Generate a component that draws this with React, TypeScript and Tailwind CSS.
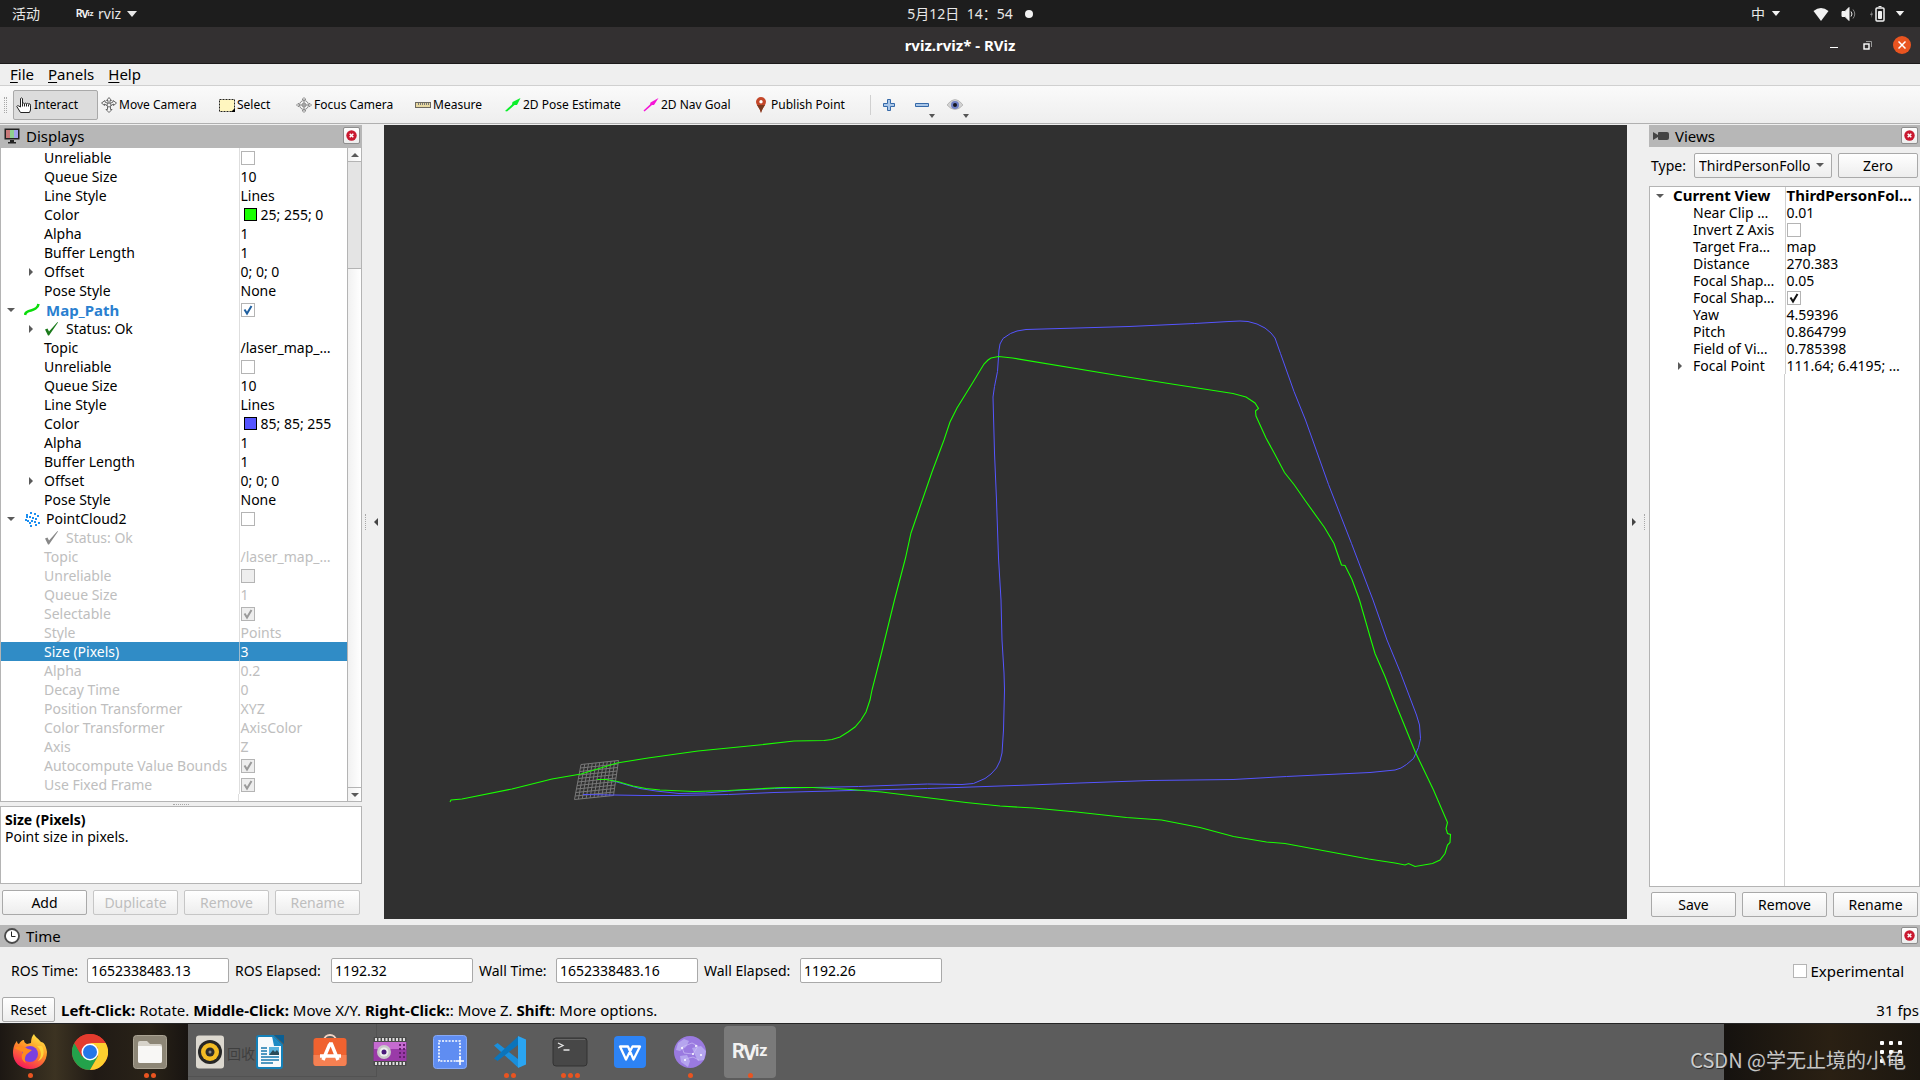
import type { ReactNode } from "react";

type Row = {
  name: string;
  value?: string;
  check?: boolean;
  swatch?: "green" | "blue";
  arrow?: "open" | "closed";
  level?: number;
  icon?: ReactNode;
  off?: boolean;
  selected?: boolean;
  link?: boolean;
};

const GREEN_PATH =
  "450,802 451,800 462,799 512,789 552,779 581,774 617,763 648,758 698,751 759,745 794,741 824,740.5 832,739.5 840,737 848,732 855,727 861,720 866,712 870,700 872,690 881,655 894.5,600 905.5,558 911,533 932,472 944,440 950,422 957,408 972.5,383 984,364 988,360 991,358 998.5,356.5 1012.5,358 1118,375.5 1175,384.5 1233,393.5 1246,397 1255,403 1258.5,408.5 1255.5,411 1256,416 1266,438 1275,454.5 1284.5,472.5 1294,484.5 1305.5,501 1324.5,527.5 1334,543.5 1338.5,556.5 1341.5,565 1345,565.5 1352,579.5 1359.5,600 1371,640 1375,653.5 1385,676.5 1393.5,698.5 1415.5,752.5 1433.5,790 1447.5,822.5 1446,828.5 1447.5,833.5 1450.5,834.5 1450,842.5 1447.5,845 1445,853.5 1440,860 1432.5,863.5 1415,866.5 1408.5,863.5 1405,865 1395,863 1368.5,859 1285,843.5 1266.5,842 1233.5,836.5 1200,827.5 1161.5,820 1126.5,817.5 1076.5,812 1033.5,808 1000,806 966,802.5 881.5,792 851,789.5 812.5,787.5 782,787.5 728.5,790.5 694,791.5 660,790 646,788.5 633,786 617.5,781.5 606,779.5 597,779.5";

const BLUE_PATH =
  "610,780 629,785.5 640,788.5 656,791 679,793.5 705.5,793 736,790.5 774.5,788.5 812.5,787.5 858.5,786.5 927.5,784 962,784.5 973.5,783.5 985,778.5 991,774 996.5,768 1000,761 1002,753 1003.5,730 1004.5,690 1004,673 1002,640 1001,600 998.5,558 996.5,500 994.5,453 993,397 994.5,386.5 997.5,371.5 999,350 1000,344 1003,338.5 1010.5,333.5 1017,331 1026,329.5 1129,326.5 1194.5,323.5 1229,321.5 1240,321 1248,321.5 1257,324 1265,328 1271,333 1275,338 1280.5,353.5 1294,391.5 1305.5,420 1328.5,484.5 1351.5,543.5 1373,600 1387,640 1400,671.5 1416.5,715 1419.5,725 1420.5,738.5 1418.5,747.5 1413.5,758.5 1406.5,764.5 1401,768 1395,770 1370,772.5 1286.5,776.5 1233,779.5 1150,780.5 1080,783 1030,785 1000,786 927.5,788.5 774,792.5 728.5,794.5 675,795.5 644,795.5 583,794.5";

const pathIcon = (
  <svg viewBox="0 0 16 16" className="size-4">
    <path d="M1 13c.5-3.500 3.500-4 6-4.500S14 6 14.500 2" fill="none" stroke="#0bdc0b" strokeWidth="2.600" />
  </svg>
);

const cloudIcon = (
  <svg viewBox="0 0 16 16" className="size-4" fill="#1d8ff0">
    {[[6, 1], [2, 3], [10, 2], [13, 4], [5, 5], [8, 6], [1, 8], [3, 9], [11, 7], [7, 9], [14, 11], [5, 11], [10, 10], [6, 14], [11, 13], [2, 5]].map(
      ([x, y]) => (
        <rect key={`${x}-${y}`} x={x} y={y} width="2" height="2" />
      )
    )}
  </svg>
);

function Tick({ color }: { color: string }) {
  return (
    <svg viewBox="0 0 16 16" className="size-4">
      <path d="M1 8.500l2.500-1 1.500 3L13.500 1 14 1.500 5 14.500H4z" fill={color} />
    </svg>
  );
}

const displayRows: Row[] = [
  { name: "Unreliable", check: false },
  { name: "Queue Size", value: "10" },
  { name: "Line Style", value: "Lines" },
  { name: "Color", value: "25; 255; 0", swatch: "green" },
  { name: "Alpha", value: "1" },
  { name: "Buffer Length", value: "1" },
  { name: "Offset", value: "0; 0; 0", arrow: "closed" },
  { name: "Pose Style", value: "None" },
  { name: "Map_Path", check: true, arrow: "open", level: 0, icon: pathIcon, link: true },
  { name: "Status: Ok", arrow: "closed", icon: <Tick color="#1b7a1b" /> },
  { name: "Topic", value: "/laser_map_…" },
  { name: "Unreliable", check: false },
  { name: "Queue Size", value: "10" },
  { name: "Line Style", value: "Lines" },
  { name: "Color", value: "85; 85; 255", swatch: "blue" },
  { name: "Alpha", value: "1" },
  { name: "Buffer Length", value: "1" },
  { name: "Offset", value: "0; 0; 0", arrow: "closed" },
  { name: "Pose Style", value: "None" },
  { name: "PointCloud2", check: false, arrow: "open", level: 0, icon: cloudIcon },
  { name: "Status: Ok", icon: <Tick color="#888888" />, off: true },
  { name: "Topic", value: "/laser_map_…", off: true },
  { name: "Unreliable", check: false, off: true },
  { name: "Queue Size", value: "1", off: true },
  { name: "Selectable", check: true, off: true },
  { name: "Style", value: "Points", off: true },
  { name: "Size (Pixels)", value: "3", selected: true },
  { name: "Alpha", value: "0.2", off: true },
  { name: "Decay Time", value: "0", off: true },
  { name: "Position Transformer", value: "XYZ", off: true },
  { name: "Color Transformer", value: "AxisColor", off: true },
  { name: "Axis", value: "Z", off: true },
  { name: "Autocompute Value Bounds", check: true, off: true },
  { name: "Use Fixed Frame", check: true, off: true },
];

const viewRows: Row[] = [
  { name: "Near Clip …", value: "0.01" },
  { name: "Invert Z Axis", check: false },
  { name: "Target Fra…", value: "map" },
  { name: "Distance", value: "270.383" },
  { name: "Focal Shap…", value: "0.05" },
  { name: "Focal Shap…", check: true },
  { name: "Yaw", value: "4.59396" },
  { name: "Pitch", value: "0.864799" },
  { name: "Field of Vi…", value: "0.785398" },
  { name: "Focal Point", value: "111.64; 6.4195; …", arrow: "closed" },
];

function Arrow({ open }: { open?: boolean }) {
  return (
    <svg viewBox="0 0 8 8" className="size-2" fill="#5a5a5a">
      <path d={open ? "M0 2h8L4 6z" : "M2 0v8l4-4z"} />
    </svg>
  );
}

function Check({ label, checked, off, tick }: { label: string; checked?: boolean; off?: boolean; tick: string }) {
  return (
    <span className="relative block size-3.5">
      <input
        type="checkbox"
        aria-label={label}
        defaultChecked={checked}
        disabled={off}
        className="block size-3.5 appearance-none border border-[#b4b4b4] bg-white disabled:bg-[#eeeeee]"
      />
      {checked && (
        <svg viewBox="0 0 14 14" className="pointer-events-none absolute inset-0" fill="none" stroke={tick} strokeWidth="2">
          <path d="M3.500 6.500l2.500 4L10.500 3" />
        </svg>
      )}
    </span>
  );
}

function PanelButton({ children, disabled, className = "flex-1" }: { children: ReactNode; disabled?: boolean; className?: string }) {
  return (
    <button
      disabled={disabled}
      className={`h-[25px] rounded-xs border border-[#a9a9a9] bg-linear-to-b from-white to-[#ededed] leading-5 disabled:border-[#c6c6c6] disabled:text-[#bebebe] ${className}`}
    >
      {children}
    </button>
  );
}

function PanelHeader({ title, icon }: { title: string; icon: ReactNode }) {
  return (
    <div className="flex h-[22px] shrink-0 items-center bg-[#b7b7b7] pr-0.5 pl-1">
      {icon}
      <h2 className="ml-1.5 flex-1 text-[15px]">{title}</h2>
      <button
        aria-label={`Close ${title}`}
        className="mb-px flex size-[17px] items-center justify-center rounded-xs border border-[#8e8e8e] bg-linear-to-b from-white to-[#ededed]"
      >
        <svg viewBox="0 0 11 11" className="size-[11px]">
          <circle cx="5.500" cy="5.500" r="5.200" fill="#c9182f" />
          <path d="M3.700 3.700l3.600 3.600M7.300 3.700L3.700 7.300" stroke="#fff" strokeWidth="1.500" />
        </svg>
      </button>
    </div>
  );
}

function DisplayTree() {
  return (
    <div className="flex min-h-0 flex-1 border border-t-[#b7b7b7] border-[#b4b4b4] bg-white">
      <div className="flex min-w-0 flex-1 flex-col overflow-hidden">
        <table className="w-full table-fixed">
          <tbody>
            {displayRows.map((row, i) => (
              <tr
                key={i}
                className={`h-[19px] ${row.selected ? "bg-[#308cc6] text-white" : row.off ? "text-[#bebebe]" : ""} ${
                  row.link ? "text-[15px] font-bold text-[#2a7fd0]" : ""
                }`}
              >
                <td className="w-[238px] border-r border-[#d0d0d0]/70 p-0 leading-[18px] whitespace-nowrap">
                  <span className={`flex h-[19px] items-center ${row.level === 0 ? "pl-1.5" : "pl-[26px]"}`}>
                    <span className="w-[17px] shrink-0">{row.arrow && <Arrow open={row.arrow === "open"} />}</span>
                    {row.icon && <span className="mr-1.5">{row.icon}</span>}
                    {row.name}
                  </span>
                </td>
                <td className="p-0 pl-px leading-[18px] whitespace-nowrap">
                  <span className="flex h-[19px] items-center">
                    {row.swatch === "green" && <i className="mr-1 ml-[3px] size-[13px] border border-black bg-[#19ff00]" />}
                    {row.swatch === "blue" && <i className="mr-1 ml-[3px] size-[13px] border border-black bg-[#5555ff]" />}
                    {row.check !== undefined && (
                      <Check label={row.name} checked={row.check} off={row.off} tick={row.off ? "#9a9a9a" : "#1f5f9f"} />
                    )}
                    {row.value}
                  </span>
                </td>
              </tr>
            ))}
          </tbody>
        </table>
        <div className="w-[238px] flex-1 border-r border-[#d0d0d0]/70" />
      </div>
      <div className="flex w-3.5 flex-col border-l border-[#b4b4b4] bg-linear-to-r from-[#f1f1f1] to-white">
        <button aria-label="Scroll up" className="flex h-[13px] items-center justify-center">
          <svg viewBox="0 0 8 8" className="size-2" fill="#5a5a5a"><path d="M0 6h8L4 2z" /></svg>
        </button>
        <div className="h-[108px] border-y border-[#b4b4b4] bg-[#e4e4e4]" />
        <div className="flex-1" />
        <button aria-label="Scroll down" className="flex h-3.5 items-center justify-center border-t border-[#b4b4b4]">
          <Arrow open />
        </button>
      </div>
    </div>
  );
}

function ViewTree() {
  return (
    <div className="mt-2 flex min-h-0 flex-1 flex-col border border-[#b4b4b4] bg-white">
      <table className="w-full table-fixed">
        <tbody>
          <tr className="h-[17px] text-[15px] font-bold">
            <td className="w-[135px] border-r border-[#d0d0d0] p-0 leading-[17px] whitespace-nowrap">
              <span className="flex h-[17px] items-center pl-1.5">
                <span className="w-[17px]"><Arrow open /></span>
                Current View
              </span>
            </td>
            <td className="p-0 pl-px leading-[17px] whitespace-nowrap">ThirdPersonFol…</td>
          </tr>
          {viewRows.map((row, i) => (
            <tr key={i} className="h-[17px]">
              <td className="border-r border-[#d0d0d0] p-0 leading-[17px] whitespace-nowrap">
                <span className="flex h-[17px] items-center pl-[26px]">
                  <span className="w-[17px] shrink-0">{row.arrow && <Arrow />}</span>
                  {row.name}
                </span>
              </td>
              <td className="p-0 pl-px leading-[17px] whitespace-nowrap">
                {row.check !== undefined ? <Check label={row.name} checked={row.check} tick="#111111" /> : row.value}
              </td>
            </tr>
          ))}
        </tbody>
      </table>
      <div className="w-[135px] flex-1 border-r border-[#d0d0d0]" />
    </div>
  );
}

function Scene() {
  const a = [581, 764.5], b = [618.5, 760.5], c = [613.5, 795.5], d = [574.5, 799.5];
  const mix = (p: number[], q: number[], t: number) => [p[0] + (q[0] - p[0]) * t, p[1] + (q[1] - p[1]) * t];
  const lines = Array.from({ length: 11 }, (_, i) => i / 10).flatMap((t) => [
    [mix(a, b, t), mix(d, c, t)],
    [mix(a, d, t), mix(b, c, t)],
  ]);
  return (
    <svg viewBox="384 125 1243 794" className="h-full w-full" fill="none">
      <g stroke="#a0a0a0" strokeWidth="1" opacity="0.650">
        {lines.map(([p, q], i) => (
          <line key={i} x1={p[0]} y1={p[1]} x2={q[0]} y2={q[1]} />
        ))}
      </g>
      <polyline points={BLUE_PATH} stroke="#5555ff" strokeWidth="1" />
      <polyline points={GREEN_PATH} stroke="#19ff00" strokeWidth="1.100" />
    </svg>
  );
}

const crosshair = (
  <svg viewBox="0 0 16 16" className="size-4" fill="none" stroke="#8a8a8a" strokeWidth="1">
    <path d="M6.500 3V2L8 .5 9.500 2v1M6.500 13v1L8 15.500 9.500 14v-1M3 6.500H2L.5 8 2 9.500h1M13 6.500h1L15.500 8 14 9.500h-1" />
    <circle cx="8" cy="8" r="4.500" />
    <circle cx="8" cy="8" r="2" />
    <path d="M8 2v12M2 8h12" />
  </svg>
);

const tools = [
  {
    label: "Interact",
    width: "w-[85px]",
    icon: (
      <svg viewBox="0 0 16 16" className="size-4" fill="#fff" stroke="#222" strokeWidth="1">
        <path d="M4.500 10V1.500q1-1.200 2 0V6.500q1-.800 2 0 1-.800 2 .2 1-.800 2 .2 2-.600 2 1.300V13l-1 2.500H4.500L.8 9.500q.5-1.500 2-.5z" />
        <path d="M6.500 6.500v3M8.500 7v2.500M10.500 7v2.500M12.500 7.500v2" />
      </svg>
    ),
  },
  {
    label: "Move Camera",
    width: "w-[118px]",
    icon: (
      <svg viewBox="0 0 16 16" className="size-4" fill="#f4f4f4" stroke="#666" strokeWidth="1">
        <path d="M8 .5l2.500 3H9v3l3-1.500V3.500L15.500 6l-3 2.500V7L9.500 9v3.500H11l-3 3-3-3h1.500V9l-3-2v1.500L.5 6l3.500-2.500V5l3 1.500v-3H5.500z" />
        <circle cx="8" cy="8" r="2" />
      </svg>
    ),
  },
  {
    label: "Select",
    width: "w-[77px]",
    icon: (
      <svg viewBox="0 0 16 16" className="size-4">
        <rect x=".5" y="2.500" width="15" height="12" fill="#fff6bf" stroke="#222" strokeDasharray="2 1" />
        <path d="M16 11v4h-4z" fill="#000" />
      </svg>
    ),
  },
  { label: "Focus Camera", width: "w-[119px]", icon: crosshair },
  {
    label: "Measure",
    width: "w-[90px]",
    icon: (
      <svg viewBox="0 0 16 16" className="size-4">
        <rect x=".5" y="5.500" width="15" height="5" fill="#e8d9a2" stroke="#6d6960" />
        <path d="M3.500 6v2M5.500 6v2M7.500 6v2M9.500 6v2M11.500 6v2M13.500 6v2" stroke="#777" />
      </svg>
    ),
  },
  {
    label: "2D Pose Estimate",
    width: "w-[138px]",
    icon: (
      <svg viewBox="0 0 16 16" className="size-4" fill="#0bef2b">
        <path d="M15.500 1L12 8 9.500 8 2 14.500 0 14l7-6.500.5-2.500z" />
      </svg>
    ),
  },
  {
    label: "2D Nav Goal",
    width: "w-[110px]",
    icon: (
      <svg viewBox="0 0 16 16" className="size-4" fill="#f514d6">
        <path d="M15.500 1L11 8 9 8 1.500 14.500 .5 13.500l6.500-6 .5-2z" />
      </svg>
    ),
  },
  {
    label: "Publish Point",
    width: "w-[110px]",
    icon: (
      <svg viewBox="0 0 16 16" className="size-4">
        <path d="M8 16C7 11 3 8.500 3 4.800a5 4.800 0 0 1 10 0C13 8.500 9 11 8 16z" fill="#c4472a" />
        <path d="M8 16c-.8-4-3-6-4-8h8c-1 2-3 4-4 8z" fill="#7a3a20" />
        <circle cx="8" cy="4.800" r="1.700" fill="#fff" />
      </svg>
    ),
  },
];

const timeFields = [
  { label: "ROS Time:", value: "1652338483.13", width: "w-[70px]" },
  { label: "ROS Elapsed:", value: "1192.32", width: "w-[90px]" },
  { label: "Wall Time:", value: "1652338483.16", width: "w-[71px]" },
  { label: "Wall Elapsed:", value: "1192.26", width: "w-[90px]" },
];

function RvizLogo({ className }: { className: string }) {
  return (
    <svg viewBox="0 0 36 32" className={`[font-family:Roboto,sans-serif] ${className}`} fill="#f2f2f2" fontWeight="700">
      <text x="0" y="22" fontSize="20">R</text>
      <text x="11" y="24" fontSize="21">V</text>
      <text x="23" y="20" fontSize="16">iz</text>
    </svg>
  );
}

const dockApps: { name: string; dots: number; icon: ReactNode }[] = [
  {
    name: "Firefox",
    dots: 1,
    icon: (
      <>
        <defs>
          <linearGradient id="ff" x1="0.800" y1="0" x2="0.300" y2="1">
            <stop offset="0" stopColor="#fff04a" />
            <stop offset=".45" stopColor="#ff9326" />
            <stop offset="1" stopColor="#f5155c" />
          </linearGradient>
        </defs>
        <path d="M22 0c1 3 4 4 7 8 3 0 5 4 6 10 0 10-7 17-17 17S1 28 1 19C1 13 3 9 5 7c0 2 1 3 2 3 1-2 3-4 5-4 0 2 1 3 3 4l4-1c0-4 1-7 3-9z" fill="url(#ff)" />
        <circle cx="18" cy="20" r="8" fill="#7b3fe0" />
        <path d="M2 14c5-3 10-2 14 1l4 1-5 4c-2 2-3 6-1 9-5-2-5-8-3-11z" fill="#ff8a1e" />
        <path d="M25 12c5 4 5 11 1 15 6-2 7-10 4-15z" fill="#ffd43a" />
      </>
    ),
  },
  {
    name: "Chrome",
    dots: 0,
    icon: (
      <>
        <circle cx="18" cy="18" r="18" fill="#e33b2e" />
        <path d="M2.400 9A18 18 0 0 0 18 36l8-13.500-15.800 0z" fill="#23a24b" />
        <path d="M33.600 9A18 18 0 0 1 18 36l7.800-13.500L26 14 18 9z" fill="#fdcf2f" />
        <path d="M2.400 9A18 18 0 0 1 33.600 9H18l-8 13.500z" fill="#e33b2e" />
        <circle cx="18" cy="18" r="8.500" fill="#fff" />
        <circle cx="18" cy="18" r="7" fill="#2576e8" />
      </>
    ),
  },
  {
    name: "Files",
    dots: 2,
    icon: (
      <>
        <rect x="1.500" y="1.500" width="33" height="33" rx="3" fill="#8d8676" stroke="#aaa393" />
        <path d="M6 9q0-2 2-2h7l3 3h10q2 0 2 2v15q0 2-2 2H8q-2 0-2-2z" fill="#d7d3ca" />
        <path d="M6 12h22q2 0 2 2v13q0 2-2 2H8q-2 0-2-2z" fill="#f8f7f5" />
      </>
    ),
  },
  {
    name: "Rhythmbox",
    dots: 0,
    icon: (
      <>
        <rect x="4" y="1.500" width="28" height="33" rx="3" fill="#dcd8cf" />
        <circle cx="18" cy="18" r="12" fill="#262626" />
        <circle cx="18" cy="18" r="9" fill="#f4bc24" />
        <circle cx="18" cy="18" r="4.500" fill="#2b2b2b" />
        <circle cx="18" cy="18" r="1.500" fill="#888" />
      </>
    ),
  },
  {
    name: "LibreOffice Writer",
    dots: 0,
    icon: (
      <>
        <path d="M7 2h14l9 9v21q0 2-2 2H7q-2 0-2-2V4q0-2 2-2z" fill="#f6fafc" stroke="#1480b8" strokeWidth="2" />
        <path d="M22 1h10v9z" fill="#0b5f93" />
        <path d="M20 2l10 10h-8z" fill="#1c8ac4" />
        <path d="M9 14h6M9 17h6M9 20h6M9 23h18M9 26h18M9 29h12" stroke="#1778ad" strokeWidth="1.500" />
        <rect x="17" y="13" width="10" height="8" fill="#58b2dd" />
        <path d="M17 21l4-5 2 2 2-2 2 3v2z" fill="#2c4b58" />
      </>
    ),
  },
  {
    name: "Ubuntu Software",
    dots: 0,
    icon: (
      <>
        <path d="M12 7c0-8 12-8 12 0" fill="none" stroke="#f3d4c4" strokeWidth="2" />
        <rect x="1.500" y="4" width="33" height="28" rx="3" fill="#f0622f" />
        <path d="M1.500 21h33v8q0 3-3 3h-27q-3 0-3-3z" fill="#f58052" />
        <path d="M17.800 10L11 26M17 10h2.500L26 26M8 22h21" fill="none" stroke="#fff" strokeWidth="3.400" />
      </>
    ),
  },
  {
    name: "Cheese",
    dots: 0,
    icon: (
      <>
        <rect x="1.500" y="3" width="33" height="29" rx="1" fill="#4a4a4a" />
        <rect x="1.500" y="8" width="33" height="19" fill="#9a3aa8" />
        <path d="M2 8h32v7H2z" fill="#c56bd0" />
        <path d="M3 5.500h31M3 29.500h31" stroke="#ddd" strokeWidth="3" strokeDasharray="2 1.500" />
        <path d="M28 10v16M32 10v16" stroke="#65206f" strokeWidth="2" strokeDasharray="2 2" />
        <circle cx="12" cy="18" r="7" fill="#c9c9c9" />
        <circle cx="12" cy="18" r="4.500" fill="#eee" />
        <circle cx="12" cy="18" r="2.500" fill="#4b1b7a" />
      </>
    ),
  },
  {
    name: "Screenshot",
    dots: 0,
    icon: (
      <>
        <rect x="1.500" y="1.500" width="33" height="33" rx="3" fill="#5f8df2" stroke="#85a9f8" />
        <path d="M28 24V7H7v20h17" fill="none" stroke="#fff" strokeWidth="1.600" strokeDasharray="2 1.300" />
        <path d="M28 23v8M24 27h8" stroke="#fff" strokeWidth="1.600" />
      </>
    ),
  },
  {
    name: "Visual Studio Code",
    dots: 2,
    icon: (
      <>
        <path d="M2 11.500l3.500-2.500L26 25v8.500z" fill="#1a8fdc" />
        <path d="M2 24.500L5.500 27 26 11V2.500z" fill="#0c74ba" />
        <path d="M26 2l8 3.500v25L26 34z" fill="#2aa5f2" />
      </>
    ),
  },
  {
    name: "Terminal",
    dots: 3,
    icon: (
      <>
        <rect x="1" y="4" width="34" height="28" rx="3" fill="#474747" stroke="#333" />
        <path d="M3 5.500h30" stroke="#666" />
        <path d="M6 9l5 2.500-5 2.500M11.500 16h6" fill="none" stroke="#e8e8e8" strokeWidth="1.300" />
      </>
    ),
  },
  {
    name: "WPS Office",
    dots: 0,
    icon: (
      <>
        <rect x="2" y="2" width="32" height="32" rx="4" fill="#2d83f5" />
        <path d="M8 12.500h8l5.500 13 6.500-13h-7.500l-6.500 13z" fill="none" stroke="#fff" strokeWidth="2.300" strokeLinejoin="round" />
      </>
    ),
  },
  {
    name: "Network",
    dots: 1,
    icon: (
      <>
        <circle cx="18" cy="18" r="16" fill="#9a7ae0" />
        <path d="M6 9l6-4 5 2-3 6-6 4-4-1zM20 14l9-2 5 5-2 9-6 1-3-6zM8 22l7-1 3 6-2 6-7-5z" fill="#b5a5ee" />
        <path d="M10 13l10-4 6 3-5 8-9-1zM13 25l8-2 6 3" fill="none" stroke="#cdbff7" strokeWidth=".7" />
        <g fill="#fff">
          <circle cx="10" cy="14" r="1" /><circle cx="24" cy="12" r="1" /><circle cx="13" cy="26" r="1" /><circle cx="21" cy="20" r="1" /><circle cx="29" cy="21" r="1" />
        </g>
      </>
    ),
  },
];

function Dock() {
  return (
    <nav
      aria-label="Dock"
      className="relative flex h-[57px] shrink-0 items-center border-t border-[#252525] bg-[linear-gradient(to_right,#1c1713_0,#3c3322_55px,#201a15_95px,#2a2318_150px,#181411_188px,#5c5c5c_188px,#5c5c5c_calc(100%_-_196px),#15120f_calc(100%_-_196px),#2a2013_calc(100%_-_90px),#1c1710_100%)]"
    >
      <span className="absolute top-5 left-[227px] text-[14px] leading-[20px] text-[#3f3f3f]">回收</span>
      <span className="absolute top-0 bottom-[3px] left-[188px] w-[189px] border-r border-b border-[#525252]" />
      {dockApps.map((app) => (
        <button key={app.name} aria-label={app.name} className="relative flex h-14 w-[60px] items-center justify-center">
          <svg viewBox="0 0 36 36" className="size-9">{app.icon}</svg>
          <span className="absolute inset-x-0 bottom-0.5 flex justify-center gap-0.5">
            {Array.from({ length: app.dots }, (_, i) => (
              <i key={i} className="size-[5px] rounded-full bg-[#e95420]" />
            ))}
          </span>
        </button>
      ))}
      <button aria-label="RViz" className="relative ml-1 flex size-[52px] items-center justify-center rounded-sm bg-[#7a7a7a]">
        <RvizLogo className="h-8 w-9" />
        <i className="absolute bottom-0 size-[5px] rounded-full bg-[#e95420]" />
      </button>
      <button aria-label="Show applications" className="mr-[18px] ml-auto grid grid-cols-3 gap-[5px]">
        {Array.from({ length: 9 }, (_, i) => (
          <i key={i} className="size-1 rounded-[1px] bg-white" />
        ))}
      </button>
      <span className="absolute right-3.5 bottom-1 text-[20px] leading-8 text-white/75 [font-family:'Noto_Sans_CJK_SC',sans-serif] [text-shadow:1px_1px_1px_#222]">
        CSDN @学无止境的小龟
      </span>
    </nav>
  );
}

function TopBar() {
  return (
    <header className="grid h-[27px] shrink-0 grid-cols-3 items-center bg-[#1d1d1d] text-[#e8e8e8]">
      <div className="flex items-center pl-3">
        <button>活动</button>
        <button className="ml-9 flex items-center">
          <RvizLogo className="mr-1 h-4 w-[18px]" />
          rviz
          <svg viewBox="0 0 10 6" className="ml-1.5 h-1.5 w-2.5" fill="#e8e8e8"><path d="M0 0h10L5 6z" /></svg>
        </button>
      </div>
      <button className="flex items-center justify-center pl-5">
        5月12日&nbsp; 14：54
        <i className="ml-3 size-2 rounded-full bg-[#f2f2f2]" />
      </button>
      <div className="flex items-center justify-end pr-[15px]">
        <span>中</span>
        <svg viewBox="0 0 10 6" className="mr-8 ml-1.5 h-[5px] w-2.5" fill="#f2f2f2"><path d="M0 0h10L5 6z" /></svg>
        <svg viewBox="0 0 16 16" className="mr-3 size-4" fill="#f2f2f2"><path d="M8 15L.5 5Q8-1 15.500 5z" /></svg>
        <svg viewBox="0 0 16 16" className="mr-3 size-4" fill="none" stroke="#f2f2f2">
          <path d="M1 5.500h3l4-4v13l-4-4H1z" fill="#f2f2f2" />
          <path d="M10 5.500q2 2.500 0 5" />
          <path d="M12 3.500q3.500 4.500 0 9" stroke="#888" />
        </svg>
        <svg viewBox="0 0 16 16" className="mr-[10px] size-4" fill="none" stroke="#f2f2f2">
          <path d="M3.500 4L1 9h1.500L2 12l2-4.500H2.500z" fill="#888" stroke="none" />
          <rect x="7" y="2" width="8" height="13" rx="1" strokeWidth="1.500" />
          <path d="M9.500 5.500h3v7h-3zM9.500 .5h3" fill="#f2f2f2" />
        </svg>
        <svg viewBox="0 0 10 6" className="h-[5px] w-2.5" fill="#f2f2f2"><path d="M0 0h10L5 6z" /></svg>
      </div>
    </header>
  );
}

function Grip({ className }: { className: string }) {
  return <span className={`border-dotted border-[#a8a8a8] ${className}`} />;
}

export default function App() {
  return (
    <div className="flex h-screen flex-col overflow-hidden bg-[#efefef] text-[14px] leading-5 text-black [font-family:'Noto_Sans','Noto_Sans_CJK_SC',sans-serif]">
      <TopBar />

      <div className="grid h-[37px] shrink-0 grid-cols-3 items-center border-b border-[#1c1a1a] bg-[#333031] text-white">
        <span />
        <h1 className="text-center text-[15px] font-bold">rviz.rviz* - RViz</h1>
        <div className="flex items-center justify-end gap-[25px] pr-[9px]">
          <button aria-label="Minimize" className="mt-1 h-px w-2 bg-white" />
          <button aria-label="Restore">
            <svg viewBox="0 0 9 9" className="size-[9px]" fill="none" stroke="#fff">
              <path d="M3 .5h5.500V6" stroke="#999" />
              <rect x="1" y="3" width="5" height="5" strokeWidth="1.400" />
            </svg>
          </button>
          <button aria-label="Close" className="-ml-1 flex size-[18px] items-center justify-center rounded-full bg-[#e95420]">
            <svg viewBox="0 0 8 8" className="size-2" stroke="#fff" strokeWidth="1.500"><path d="M.5 .5l7 7M7.500 .5l-7 7" /></svg>
          </button>
        </div>
      </div>

      <div className="flex h-[22px] shrink-0 items-center gap-3.5 border-b border-[#d0d0d0] pb-0.5 pl-2.5 text-[15px]">
        {["File", "Panels", "Help"].map((m) => (
          <button key={m}>
            <u className="underline-offset-2">{m[0]}</u>
            {m.slice(1)}
          </button>
        ))}
      </div>

      <div className="flex h-[38px] shrink-0 items-center border-b border-[#b0b0b0] bg-linear-to-b from-[#fafafa] to-[#eeeeee] text-[12px]">
        <Grip className="mr-1.5 ml-1 h-4 w-[3px] border-x" />
        {tools.map((tool, i) => (
          <button
            key={tool.label}
            className={`flex h-[30px] items-center gap-0.5 border pl-0.5 whitespace-nowrap ${tool.width} ${
              i === 0 ? "rounded-xs border-[#a9a9a9] bg-[#dcdcdc]" : "border-transparent"
            }`}
          >
            <span className="shrink-0">{tool.icon}</span>
            {tool.label}
          </button>
        ))}
        <span className="mx-2.5 h-5 w-px bg-[#d0d0d0]" />
        <button aria-label="Add tool" className="ml-px">
          <svg viewBox="0 0 14 14" className="size-3.5"><path d="M5.500 1.500h3v4h4v3h-4v4h-3v-4h-4v-3h4z" fill="#a9c6e8" stroke="#3569a8" /></svg>
        </button>
        <button aria-label="Remove tool" className="relative ml-[19px]">
          <svg viewBox="0 0 14 14" className="size-3.5"><path d="M.5 5.500h13v3H.5z" fill="#a9c6e8" stroke="#3569a8" /></svg>
          <svg viewBox="0 0 6 4" className="absolute top-4 left-3.5 h-1 w-1.5" fill="#555"><path d="M0 0h6L3 4z" /></svg>
        </button>
        <button aria-label="Tool visibility" className="relative ml-[18px]">
          <svg viewBox="0 0 16 14" className="h-3.5 w-4">
            <path d="M0 7q8-11 16 0-8 9-16 0z" fill="#d2d2d2" stroke="#aaa" strokeWidth=".7" />
            <circle cx="8" cy="7" r="4" fill="#6f80c4" />
            <circle cx="8" cy="7" r="2" fill="#15151f" />
          </svg>
          <svg viewBox="0 0 6 4" className="absolute top-4 left-4 h-1 w-1.5" fill="#555"><path d="M0 0h6L3 4z" /></svg>
        </button>
      </div>

      <main className="flex min-h-0 flex-1 pt-px pb-1.5">
        <section className="flex w-[362px] shrink-0 flex-col pb-1">
          <PanelHeader
            title="Displays"
            icon={
              <svg viewBox="0 0 16 16" className="size-4">
                <rect x=".5" y=".5" width="15" height="11" fill="#222" />
                <path d="M2 2h4v8H2z" fill="#c87878" />
                <path d="M6 2h4v8H6z" fill="#8fd08f" />
                <path d="M10 2h4v8h-4z" fill="#a3a3ea" />
                <path d="M6 12h4v2h2v1.500H4V14h2z" fill="#222" />
              </svg>
            }
          />
          <DisplayTree />
          <div className="flex h-1 shrink-0 items-center justify-center"><Grip className="h-0 w-4 border-t" /></div>
          <div className="h-[78px] shrink-0 border border-[#b4b4b4] bg-white px-1 pt-1 leading-[17px]">
            <p className="font-bold">Size (Pixels)</p>
            <p>Point size in pixels.</p>
          </div>
          <div className="mt-1.5 flex gap-1.5 px-0.5">
            <PanelButton>Add</PanelButton>
            <PanelButton disabled>Duplicate</PanelButton>
            <PanelButton disabled>Remove</PanelButton>
            <PanelButton disabled>Rename</PanelButton>
          </div>
        </section>

        <div className="flex w-[22px] shrink-0 items-center gap-2 pl-[3px]">
          <Grip className="h-4 border-l" />
          <svg viewBox="0 0 4 8" className="h-2 w-1" fill="#444"><path d="M4 0v8L0 4z" /></svg>
        </div>

        <div className="min-w-0 flex-1 bg-[#303030]">
          <Scene />
        </div>

        <div className="flex w-[22px] shrink-0 items-center gap-2 pl-[5px]">
          <svg viewBox="0 0 4 8" className="h-2 w-1" fill="#444"><path d="M0 0v8l4-4z" /></svg>
          <Grip className="h-4 border-l" />
        </div>

        <section className="flex w-[271px] shrink-0 flex-col pb-0.5">
          <PanelHeader
            title="Views"
            icon={
              <svg viewBox="0 0 16 16" className="size-4" fill="#444">
                <path d="M0 4l5 3V5q0-1 1-1h8q2 0 2 2v4q0 2-2 2H6q-1 0-1-1V9l-5 3z" />
              </svg>
            }
          />
          <div className="mt-1.5 flex items-center px-0.5">
            <label htmlFor="view-type" className="w-[43px]">Type:</label>
            <span className="relative w-[138px]">
              <select
                id="view-type"
                className="block h-[25px] w-full appearance-none rounded-xs border border-[#a9a9a9] bg-linear-to-b from-white to-[#ededed] pr-[21px] pl-1 leading-5"
              >
                <option>ThirdPersonFollower</option>
              </select>
              <svg viewBox="0 0 8 4" className="pointer-events-none absolute top-2.5 right-2 h-1 w-2" fill="#5a5a5a"><path d="M0 0h8L4 4z" /></svg>
            </span>
            <PanelButton className="ml-1.5 flex-1">Zero</PanelButton>
          </div>
          <ViewTree />
          <div className="mt-[5px] flex gap-1.5 px-0.5">
            <PanelButton>Save</PanelButton>
            <PanelButton>Remove</PanelButton>
            <PanelButton>Rename</PanelButton>
          </div>
        </section>
      </main>

      <section className="shrink-0">
        <PanelHeader
          title="Time"
          icon={
            <svg viewBox="0 0 16 16" className="size-4" fill="#fff" stroke="#4a4a4a">
              <circle cx="8" cy="8" r="7" strokeWidth="1.800" />
              <path d="M7.500 3.500v5h4" fill="none" stroke="#222" />
            </svg>
          }
        />
        <div className="flex items-center gap-1.5 pt-[11px] pr-4 pl-[11px]">
          {timeFields.map((f) => (
            <label key={f.label} className="flex items-center gap-1.5 whitespace-nowrap">
              <span className={f.width}>{f.label}</span>
              <input defaultValue={f.value} className="h-[25px] w-[142px] rounded-xs border border-[#a9a9a9] bg-white px-[3px] leading-5" />
            </label>
          ))}
          <label className="ml-auto flex items-center gap-1 text-[15px]">
            <Check label="Experimental" tick="#111111" />
            Experimental
          </label>
        </div>
        <div className="mt-3.5 flex items-center pb-px pl-0.5">
          <PanelButton className="w-[53px]">Reset</PanelButton>
          <p className="ml-1.5 flex-1 text-[15px]">
            <b>Left-Click:</b> Rotate. <b>Middle-Click:</b> Move X/Y. <b>Right-Click:</b>: Move Z. <b>Shift</b>: More options.
          </p>
          <span className="pr-px text-[15px]">31 fps</span>
        </div>
      </section>

      <Dock />
    </div>
  );
}
